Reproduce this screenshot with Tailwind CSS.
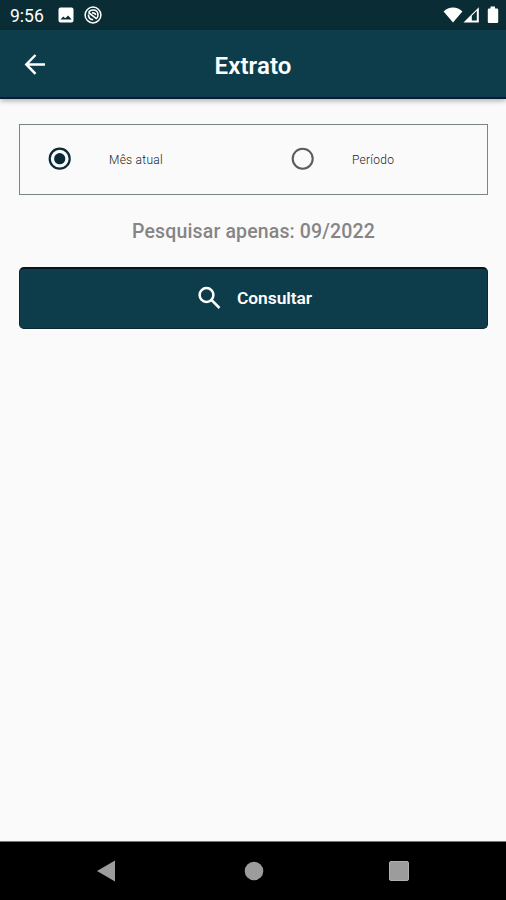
<!DOCTYPE html>
<html lang="pt-BR">
<head>
  <meta charset="UTF-8" />
  <meta name="viewport" content="width=device-width, initial-scale=1.0"/>
  <title>Extrato</title>
  <script src="https://cdn.jsdelivr.net/npm/@tailwindcss/browser@4"></script>
</head>
<body class="bg-[#fafafa] h-screen flex flex-col overflow-hidden font-['Roboto',sans-serif]">

  <!-- Barra de status -->
  <div class="h-[30px] shrink-0 bg-[#0a2d35] text-white flex items-center pl-[10px] pr-[7px]">
    <span class="w-[48px] text-[17.5px] leading-none pt-[3px]">9:56</span>
    <svg class="w-4 h-4" viewBox="0 0 16 16">
      <rect x="0.5" y="0.5" width="15" height="15" rx="2" fill="#fff"/>
      <path d="M2.5 12.5 5.3 9.5l2 1.8L10.1 8.5l3.6 4z" fill="#0a2d35"/>
    </svg>
    <svg class="w-[18px] h-[18px] ml-[10px]" viewBox="0 0 18 18" fill="none" stroke="#fff">
      <circle cx="9" cy="9" r="7.9" stroke-width="1.5"/>
      <path d="M4.6 6.5C5.5 4.8 7 4 9 4c3 0 5 2 5 5 0 1.600-.6 2.900-1.700 3.800M4.400 8.500c0 3 2 5 4.800 5.200" stroke-width="1.6"/>
      <path d="M4.500 6.500 12.700 12.800M8 7c1.800-.5 3.400.4 3.700 2.200" stroke-width="1.6"/>
    </svg>
    <svg class="w-5 h-4 ml-auto" viewBox="0 0 20 16">
      <path d="M10 15.5.6 4.5C3.200 2 6.400.6 10 .6s6.800 1.400 9.400 3.900z" fill="#fff"/>
    </svg>
    <svg class="w-4 h-4" viewBox="0 0 16 16">
      <path d="M.5 15.500 15.800.2v15.300z" fill="#fff"/>
      <path d="M8.800 8.800 13.800 3.800v9.700H8.800z" fill="#0a2d35"/>
    </svg>
    <svg class="w-3 h-[18px] ml-[8px]" viewBox="0 0 12 18">
      <path d="M3.500.5h4.500v2h2q1.200 0 1.200 1.200v12.100q0 1.200-1.200 1.200H2Q.8 17 .8 15.800V3.700q0-1.200 1.200-1.200h1.500z" fill="#fff"/>
    </svg>
  </div>

  <!-- Cabeçalho -->
  <header class="h-[69px] shrink-0 bg-[#0d3d4a] border-b-2 border-[#0b1a36] shadow-[0_2px_5px_rgba(0,0,0,0.3)] grid grid-cols-[72px_1fr_72px] items-center text-white">
    <button class="pl-[23px]" aria-label="Voltar">
      <svg class="w-6 h-6" viewBox="0 0 24 24" fill="none" stroke="#fff" stroke-width="2.5">
        <path d="M22 12.500H4M12.500 3 3.300 12.500l9.200 9.300"/>
      </svg>
    </button>
    <h1 class="text-center text-[24px] font-semibold leading-none pt-[4px] tracking-[0.1px]">Extrato</h1>
  </header>

  <main class="flex-1 pl-[19px] pr-[18px] pt-[25px]">
    <div class="h-[71px] border border-[#7b8586] grid grid-cols-[243px_1fr] items-center text-[12px] font-light text-[#222]">
      <label class="flex items-center pl-7">
        <svg class="w-6 h-6 mb-px" viewBox="0 0 24 24">
          <circle cx="11.700" cy="11.700" r="10" fill="none" stroke="#0b2a36" stroke-width="2.2"/>
          <circle cx="11.700" cy="11.700" r="5.600" fill="#0b2a36"/>
        </svg>
        <span class="ml-[37px] tracking-[0.25px]">Mês atual</span>
      </label>
      <label class="flex items-center pl-7">
        <svg class="w-6 h-6 mb-px" viewBox="0 0 24 24">
          <circle cx="11.700" cy="11.700" r="10" fill="none" stroke="#5c5c5c" stroke-width="2.1"/>
        </svg>
        <span class="ml-[37px] tracking-[0.25px]">Período</span>
      </label>
    </div>

    <p class="mt-6 h-6 text-center text-[19.5px] leading-[25px] font-medium tracking-[0.14px] text-[#858585]">Pesquisar apenas: 09/2022</p>

    <button class="mt-6 w-full h-[62px] rounded-[5px] bg-[#0d3d4a] border border-[#0a2733] border-t-2 border-t-[#08151f] flex items-center justify-center pl-[2px] text-white">
      <svg class="w-6 h-6 mb-px" viewBox="0 0 24 24" fill="none" stroke="#fff" stroke-width="2.5">
        <circle cx="9.500" cy="9" r="6.900"/>
        <path d="m14.500 14 8 8"/>
      </svg>
      <span class="ml-4 text-[17.4px] font-semibold tracking-[-0.07px]">Consultar</span>
    </button>
  </main>

  <!-- Navegação do sistema -->
  <nav class="h-[59px] shrink-0 bg-black border-t border-[#777] grid grid-cols-[180px_147px_1fr] items-center">
    <svg class="w-5 h-[22px] ml-24" viewBox="0 0 20 22"><path d="M1 11 19 .5v21z" fill="#9c9c9c"/></svg>
    <svg class="w-5 h-5 justify-self-center" viewBox="0 0 20 20"><circle cx="10" cy="10" r="9.300" fill="#9c9c9c"/></svg>
    <svg class="w-5 h-5 ml-[62px]" viewBox="0 0 20 20"><rect x=".5" y=".5" width="19" height="19" rx="1.500" fill="#9c9c9c" stroke="#b0b0b0"/></svg>
  </nav>

</body>
</html>
